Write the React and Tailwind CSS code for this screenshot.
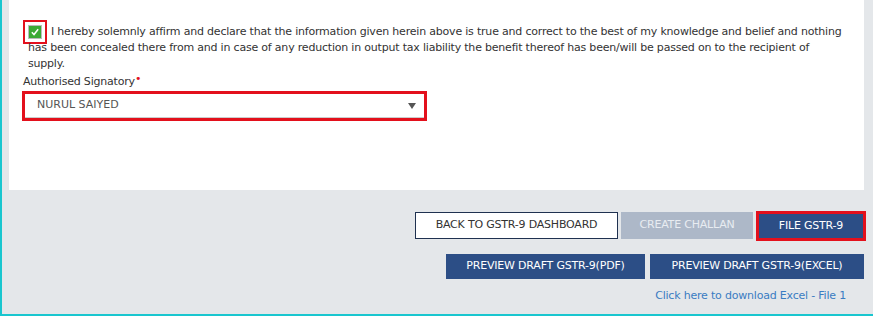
export default function App() {
  const font = { fontFamily: '"DejaVu Sans", Verdana, sans-serif' };

  return (
    <div
      className="flex h-[316px] w-[873px] flex-col border-b-2 border-l-2 border-[#19c6cf] bg-[#e4e7ea] text-[#333]"
      style={font}
    >
      <div className="ml-[7px] mr-[9px] h-[190px] bg-white pt-[24px]">
        <p className="pl-[19px] pr-[20px] text-[11px] leading-[16px] tracking-[-0.2px]">
          <span className="-my-[4px] -ml-[5px] mr-[4px] inline-flex h-[24px] w-[24px] items-center justify-center border-2 border-[#e3101c] align-middle">
            <span className="flex h-[14px] w-[14px] items-center justify-center border border-[#bbb] bg-[#3ca935]">
              <svg viewBox="0 0 12 12" className="h-[10px] w-[10px]">
                <path d="M2.2 6.4 L4.8 9 L9.8 2.6" fill="none" stroke="#fff" strokeWidth="1.8" />
              </svg>
            </span>
          </span>
          I hereby solemnly affirm and declare that the information given herein above is true and correct to the best of my knowledge and belief and nothing has been concealed there from and in case of any reduction in output tax liability the benefit thereof has been/will be passed on to the recipient of supply.
        </p>
        <div className="mt-[2px] pl-[14px] text-[11px] leading-[16px] tracking-[-0.2px]">
          Authorised Signatory<span className="relative -top-[3px] text-[#e3101c]">•</span>
        </div>
        <div className="ml-[13px] mt-[1px] w-[405px] border-[3px] border-[#e3101c]">
          <div className="flex h-[24px] items-center justify-between border-b border-[#ccc] bg-white pl-[12px] pr-[8px] text-[11px] text-[#555]">
            <span>NURUL SAIYED</span>
            <svg viewBox="0 0 8 6" className="h-[6px] w-[8px]">
              <path d="M0 0 H8 L4 6 Z" fill="#555" />
            </svg>
          </div>
        </div>
      </div>

      <div className="mr-[7px] mt-[21px] flex justify-end gap-[3px] text-[11px] tracking-[-0.2px]">
        <button className="mt-[1px] h-[27px] w-[203px] border border-[#1f3150] bg-white text-[#333]">
          BACK TO GSTR-9 DASHBOARD
        </button>
        <button className="mt-[1px] h-[27px] w-[132px] bg-[#adb8c8] text-[#e8ecf1]">
          CREATE CHALLAN
        </button>
        <div className="border-[3px] border-[#e3101c] bg-[#e3101c]">
          <button className="h-[24px] w-[104px] bg-[#2c4e86] text-white">FILE GSTR-9</button>
        </div>
      </div>

      <div className="mr-[9px] mt-[13px] flex justify-end gap-[5px] text-[11px] tracking-[-0.2px]">
        <button className="h-[25px] w-[199px] bg-[#2c4e86] text-white">
          PREVIEW DRAFT GSTR-9(PDF)
        </button>
        <button className="h-[25px] w-[214px] bg-[#2c4e86] text-white">
          PREVIEW DRAFT GSTR-9(EXCEL)
        </button>
      </div>

      <div className="mr-[27px] mt-[9px] text-right text-[11px] tracking-[-0.2px] text-[#3a7cc2]">
        Click here to download Excel - File 1
      </div>
    </div>
  );
}
